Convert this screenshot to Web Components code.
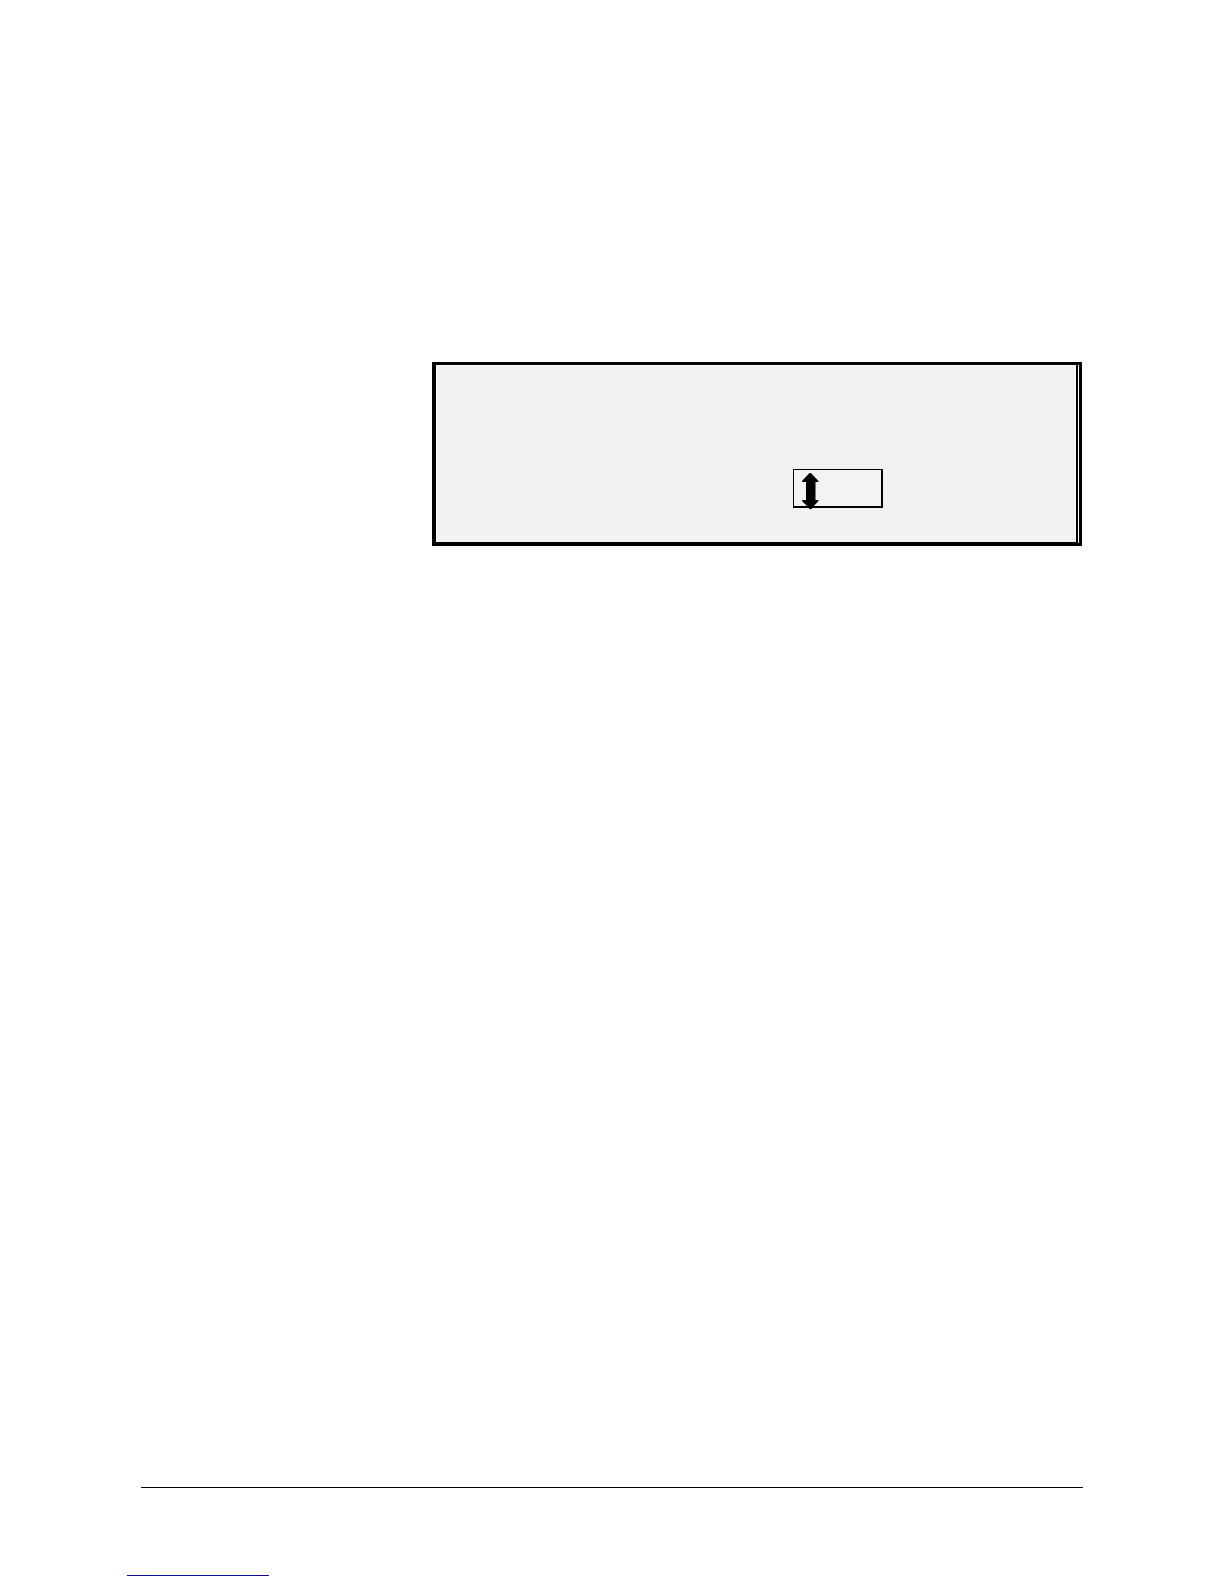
<!DOCTYPE html>
<html lang="en">
<head>
<meta charset="utf-8">
<title>Manual page</title>
<style>
  body { margin: 0; background: #fff; font-family: "Liberation Sans", Arial, sans-serif; }
</style>
</head>
<body>
<manual-page>
  <display-panel><scroll-button></scroll-button></display-panel>
  <page-footer slot="footer"></page-footer>
</manual-page>
<script>
const define = (name, markup) => {
  const template = document.createElement('template');
  template.innerHTML = markup;
  customElements.define(name, class extends HTMLElement {
    constructor() {
      super();
      this.attachShadow({ mode: 'open' }).append(template.content.cloneNode(true));
    }
  });
};

define('manual-page', `
  <style>
    :host { display: flex; flex-direction: column; box-sizing: border-box; min-height: 100vh; }
    main { flex: 1; padding: 362px 142px 32px 432px; }
  </style>
  <main><slot></slot></main>
  <slot name="footer"></slot>
`);

/* Display frame with a thin second rule along its right edge. */
define('display-panel', `
  <style>
    :host { display: block; border: solid #000; border-width: 3px 3px 3px 4px; background: #fff; }
    .screen {
      display: flex; justify-content: flex-end; margin-right: 1px;
      padding: 104px 193px 34px 32px;
      border: solid #000; border-width: 0 2px 1px 0;
      background: #f2f2f2; box-shadow: inset 1px 1px #fff;
    }
  </style>
  <section class="screen"><slot></slot></section>
`);

define('scroll-button', `
  <style>
    :host { display: block; }
    button {
      display: flex; align-items: flex-start; box-sizing: border-box;
      width: 90px; height: 39px; margin: 0; padding: 3px 7px;
      border: solid #000; border-width: 1px 2px 2px 1px; border-radius: 0;
      background: #f3f3f3;
    }
    svg { display: block; flex: none; overflow: visible; }
  </style>
  <button type="button" aria-label="Scroll">
    <svg width="18" height="36" viewBox="0 0 18 36" aria-hidden="true">
      <path d="M8.5 0 H10 L17.5 8 V9 H14.5 V27 H17.5 V28 L11 35 V36 H8 V35 L1 28 V27 H5 V9 H1 V8 Z" fill="#000"/>
    </svg>
  </button>
`);

define('page-footer', `
  <style>
    :host { display: block; padding-bottom: 8px; }
    hr { margin: 0; border: 0; height: 1px; }
    .rule { margin: 0 141px 87px; background: #000; }
    .link-rule { width: 142px; margin-left: 127px; background: #0c0ca0; }
  </style>
  <footer><hr class="rule"><hr class="link-rule"></footer>
`);
</script>
</body>
</html>
